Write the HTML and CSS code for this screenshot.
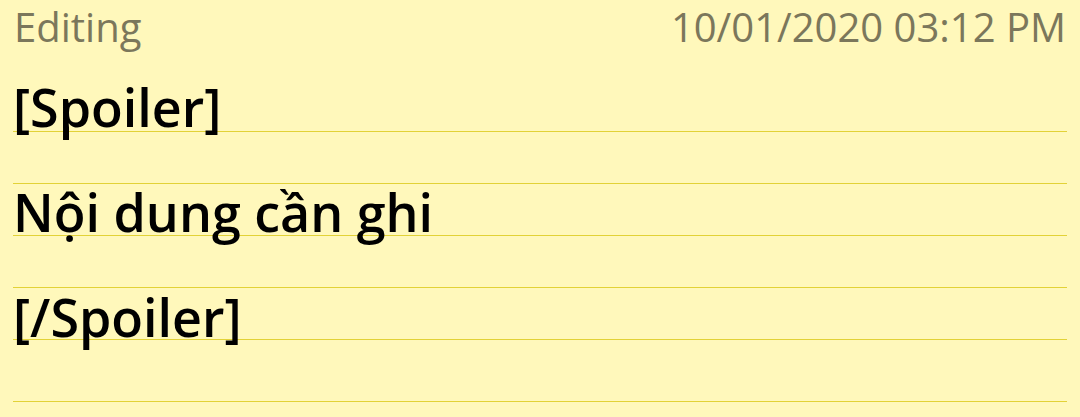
FILE: index.html
```html
<!DOCTYPE html>
<html lang="vi">
<head>
    <meta charset="UTF-8">
    <meta name="viewport" content="width=device-width, initial-scale=1.0">
    <title>Memo</title>
    <link rel="stylesheet" href="styles.css">
</head>
<body>

    <!-- Header: mode + timestamp -->
    <div class="memo-header">
        <span class="memo-mode">Editing</span>
        <span class="memo-date">10/01/2020 03:12 PM</span>
    </div>

    <!-- Lined note body -->
    <div class="memo-sheet">
        <div class="memo-line">[Spoiler]</div>
        <div class="memo-line">Nội dung cần ghi</div>
        <div class="memo-line">[/Spoiler]</div>
    </div>

</body>
</html>
```

FILE: styles.css
```css
/* General styles */
body {
    margin: 0;
    padding: 0;
    background-color: #fff8bb;
    font-family: 'Open Sans', 'Noto Sans', sans-serif;
    height: 417px;
    overflow: hidden;
}

/* Header */
.memo-header {
    display: flex;
    justify-content: space-between;
    padding: 2px 14px 0 14px;
    line-height: 50px;
    font-size: 40px;
    font-weight: 500;
    color: #7b775b;
}

/* Lined sheet */
.memo-sheet {
    margin: 0 13px;
    padding-top: 2px;
    height: 347px;
    border-bottom: 1px solid #e2d237;
    background-image: repeating-linear-gradient(
        to bottom,
        transparent 0,
        transparent 51px,
        #e2d237 51px,
        #e2d237 52px
    );
    background-size: 100% 260px;
    background-position: 0 28px;
    background-repeat: no-repeat;
}

.memo-line {
    font-size: 52px;
    font-weight: 600;
    line-height: 105px;
    color: #000;
    white-space: nowrap;
}
```
